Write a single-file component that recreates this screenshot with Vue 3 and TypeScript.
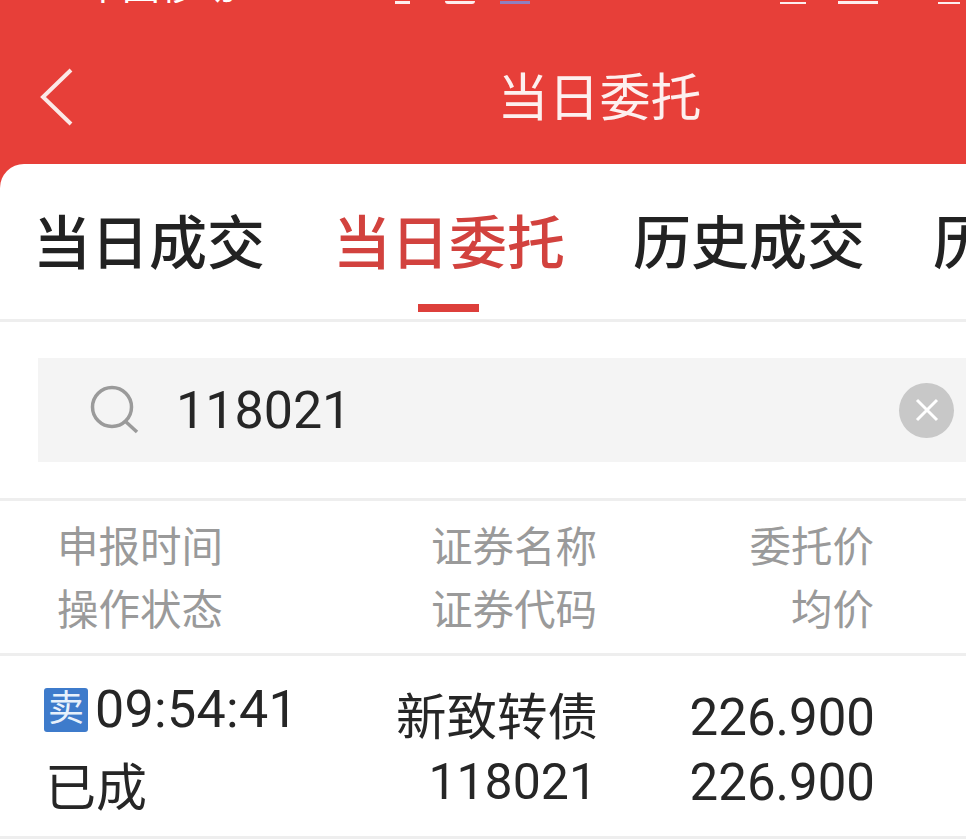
<template>
  <div class="screen">
    <header class="topbar">
      <div class="status">
        <span class="carrier">中国移动</span>
        <i class="blip one"></i>
        <i class="blip two"></i>
        <i class="blip app"></i>
        <i class="blip r1"></i>
        <i class="blip r2"></i>
        <i class="blip r3"></i>
      </div>
      <div class="navbar">
        <svg class="back" viewBox="0 0 36 60" aria-hidden="true">
          <path d="M32 3 L4 30 L32 57" />
        </svg>
        <h1 class="title">当日委托</h1>
      </div>
    </header>

    <main class="panel">
      <nav class="tabs">
        <span
          v-for="tab in tabs"
          :key="tab"
          class="tab"
          :class="{ active: tab === activeTab }"
        >{{ tab }}</span>
      </nav>

      <div class="search-wrap">
        <div class="search">
          <svg class="search-icon" viewBox="0 0 50 50" aria-hidden="true">
            <circle cx="22" cy="22" r="19.5" />
            <path d="M35 36 L47 47" />
          </svg>
          <span class="search-text">118021</span>
          <span class="clear">
            <svg viewBox="0 0 24 24" aria-hidden="true"><path d="M2 2 L22 22 M22 2 L2 22" /></svg>
          </span>
        </div>
      </div>

      <div class="grid head">
        <div class="cell">
          <span>申报时间</span>
          <span>操作状态</span>
        </div>
        <div class="cell end">
          <span>证券名称</span>
          <span>证券代码</span>
        </div>
        <div class="cell end">
          <span>委托价</span>
          <span>均价</span>
        </div>
      </div>

      <div class="grid row">
        <div class="cell">
          <span class="time"><b class="badge">{{ order.side }}</b>{{ order.time }}</span>
          <span class="state">{{ order.state }}</span>
        </div>
        <div class="cell end tight">
          <span class="name">{{ order.name }}</span>
          <span class="code">{{ order.code }}</span>
        </div>
        <div class="cell end tight">
          <span>{{ order.price }}</span>
          <span>{{ order.avg }}</span>
        </div>
      </div>
    </main>
  </div>
</template>

<script setup lang="ts">
const tabs = ['当日成交', '当日委托', '历史成交', '历史委托']
const activeTab = '当日委托'

const order = {
  side: '卖',
  time: '09:54:41',
  state: '已成',
  name: '新致转债',
  code: '118021',
  price: '226.900',
  avg: '226.900',
}
</script>

<style scoped>
.screen {
  width: 966px;
  height: 839px;
  overflow: hidden;
  background: #e73f39;
  font-family: Roboto, "Noto Sans CJK SC", sans-serif;
  color: #222;
}

.topbar {
  height: 164px;
  color: #fff;
}

/* status bar is cropped off by the top of the shot, only its last pixels show */
.status {
  height: 4px;
  overflow: hidden;
  display: flex;
  align-items: flex-end;
  padding-left: 84px;
}

.carrier {
  flex-shrink: 0;
  height: 36px;
  font-size: 38px;
  line-height: 36px;
}

.blip {
  flex-shrink: 0;
  height: 3px;
  background: #fdeeee;
}

.one {
  width: 15px;
  margin-left: 159px;
}

.two {
  width: 30px;
  margin-left: 35px;
  border-radius: 0 0 4px 4px;
}

.app {
  width: 30px;
  margin-left: 25px;
  background: #8f7fc0;
}

.r1 {
  width: 26px;
  margin-left: 250px;
  height: 2px;
}

.r2 {
  width: 40px;
  margin-left: 32px;
}

.r3 {
  width: 22px;
  margin-left: 60px;
  height: 2px;
}

.navbar {
  height: 160px;
  display: flex;
  align-items: center;
  justify-content: center;
  position: relative;
}

.back {
  position: absolute;
  left: 39px;
  top: 63px;
  width: 36px;
  height: 60px;
  fill: none;
  stroke: #fbe9e7;
  stroke-width: 4;
}

.title {
  margin: 30px 0 0 233px;
  font-size: 51px;
  font-weight: 400;
  line-height: 64px;
  color: #fdf0ef;
}

.panel {
  height: 675px;
  background: #fff;
  border-radius: 24px 0 0 0;
}

.tabs {
  height: 155px;
  padding-left: 33px;
  display: flex;
  gap: 68px;
  border-bottom: 3px solid #eeeeee;
  white-space: nowrap;
  overflow: hidden;
}

.tab {
  position: relative;
  flex-shrink: 0;
  width: 232px;
  font-size: 58px;
  line-height: 161px;
  font-weight: 500;
  color: #222;
}

.tab.active {
  color: #d2423e;
}

.tab.active::after {
  content: "";
  position: absolute;
  left: 85px;
  bottom: 7px;
  width: 61px;
  height: 8px;
  background: #dd3f3b;
}

.search-wrap {
  height: 179px;
  padding: 36px 0 36px 38px;
  box-sizing: border-box;
  border-bottom: 3px solid #eeeeee;
}

.search {
  height: 104px;
  background: #f4f4f4;
  display: flex;
  align-items: center;
  padding: 0 12px 0 52px;
}

.search-icon {
  width: 50px;
  height: 50px;
  fill: none;
  stroke: #9a9a9a;
  stroke-width: 3.5;
}

.search-text {
  margin-left: 36px;
  font-size: 52px;
  color: #262626;
}

.clear {
  margin-left: auto;
  width: 55px;
  height: 55px;
  border-radius: 50%;
  background: #c8c8c8;
  display: flex;
  align-items: center;
  justify-content: center;
}

.clear svg {
  width: 24px;
  height: 24px;
  fill: none;
  stroke: #fff;
  stroke-width: 3;
}

.grid {
  display: grid;
  grid-template-columns: 1fr 240px 277px;
  padding-right: 92px;
  border-bottom: 3px solid #eeeeee;
}

.cell {
  display: flex;
  flex-direction: column;
  white-space: nowrap;
}

.end {
  align-items: flex-end;
}

.head {
  height: 155px;
  box-sizing: border-box;
  padding-left: 57px;
  padding-top: 15px;
  font-size: 41.5px;
  line-height: 63px;
  color: #9a9a9a;
}

.row {
  height: 183px;
  box-sizing: border-box;
  padding-left: 44px;
  padding-right: 91px;
  padding-top: 19px;
  font-size: 51px;
  line-height: 70px;
  color: #262626;
}

.tight {
  padding-top: 10px;
  line-height: 65px;
}

.name {
  font-size: 50.5px;
}

.code {
  margin-right: 1px;
  font-size: 50px;
}

.time {
  display: flex;
  align-items: center;
  font-size: 52px;
  letter-spacing: 0.3px;
}

.badge {
  width: 44px;
  height: 44px;
  margin-right: 7px;
  border-radius: 3px;
  background: #3e7bcb;
  color: #e8f1fb;
  font-size: 36px;
  line-height: 42px;
  font-weight: 400;
  text-align: center;
  letter-spacing: 0;
}

.state {
  margin-top: 9px;
  margin-left: 1px;
}
</style>

<style>
html,
body {
  margin: 0;
  background: #fff;
}
</style>
